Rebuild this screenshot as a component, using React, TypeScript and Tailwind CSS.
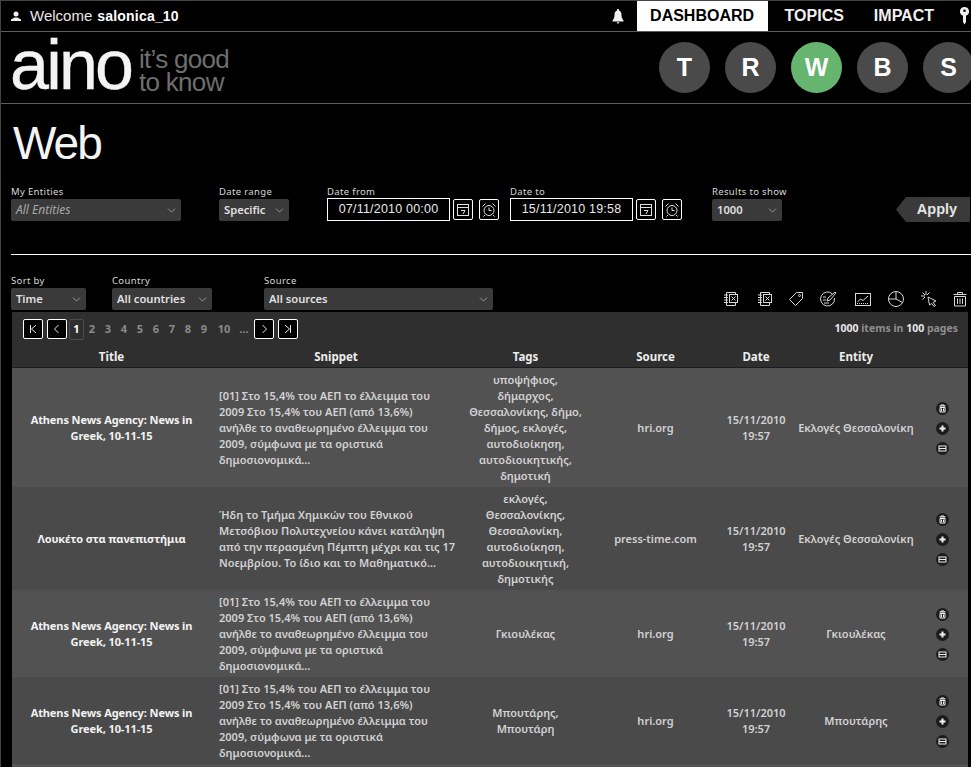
import { ChevronDown } from "lucide-react"

const tableFont = "font-['Noto_Sans',sans-serif]"
const headFont = "font-['Liberation_Sans',Arial,sans-serif]"

const athensSnippet = [
  "[01] Στο 15,4% του ΑΕΠ το έλλειμμα του",
  "2009 Στο 15,4% του ΑΕΠ (από 13,6%)",
  "ανήλθε το αναθεωρημένο έλλειμμα του",
  "2009, σύμφωνα με τα οριστικά",
  "δημοσιονομικά...",
]

const rows = [
  {
    title: "Athens News Agency: News in Greek, 10-11-15",
    snippet: athensSnippet,
    tags: "υποψήφιος, δήμαρχος, Θεσσαλονίκης, δήμο, δήμος, εκλογές, αυτοδιοίκηση, αυτοδιοικητικής, δημοτική",
    source: "hri.org",
    entity: "Εκλογές Θεσσαλονίκη",
    bg: "bg-[#525252]",
  },
  {
    title: "Λουκέτο στα πανεπιστήμια",
    snippet: [
      "Ήδη το Τμήμα Χημικών του Εθνικού",
      "Μετσόβιου Πολυτεχνείου κάνει κατάληψη",
      "από την περασμένη Πέμπτη μέχρι και τις 17",
      "Νοεμβρίου. Το ίδιο και το Μαθηματικό...",
    ],
    tags: "εκλογές, Θεσσαλονίκης, Θεσσαλονίκη, αυτοδιοίκηση, αυτοδιοικητική, δημοτικής",
    source: "press-time.com",
    entity: "Εκλογές Θεσσαλονίκη",
    bg: "bg-[#4a4a4a]",
  },
  {
    title: "Athens News Agency: News in Greek, 10-11-15",
    snippet: athensSnippet,
    tags: "Γκιουλέκας",
    source: "hri.org",
    entity: "Γκιουλέκας",
    bg: "bg-[#525252]",
  },
  {
    title: "Athens News Agency: News in Greek, 10-11-15",
    snippet: athensSnippet,
    tags: "Μπουτάρης, Μπουτάρη",
    source: "hri.org",
    entity: "Μπουτάρης",
    bg: "bg-[#4a4a4a]",
  },
  {
    title: "Athens News Agency: News in Greek, 10-11-15",
    snippet: athensSnippet,
    tags: "Μπουτάρης",
    source: "hri.org",
    entity: "Μπουτάρης",
    bg: "bg-[#525252]",
  },
]

const cols = "grid grid-cols-[199px_250px_129px_131px_70px_130px_47px]"

function Select({ label, value, width, italic }: { label: string; value: string; width: string; italic?: boolean }) {
  return (
    <div className={width}>
      <div className={`${tableFont} text-[9.5px] leading-[12px] tracking-[0.35px] whitespace-nowrap text-[#d8d8d8] mb-[1px]`}>{label}</div>
      <div className={`h-[22px] rounded-[2px] bg-[#3a3a3a] flex items-center justify-between pl-[5px] pr-[3px] ${tableFont} ${italic ? "text-[12px] italic text-[#a8a8a8]" : "text-[11.2px] font-semibold text-[#e0e0e0]"}`}>
        <span>{value}</span>
        <ChevronDown className="w-[13px] h-[13px] text-[#e0e0e0]" strokeWidth={1} />
      </div>
    </div>
  )
}

function CalendarBtn() {
  return (
    <div className="w-[20px] h-[21px] border border-white rounded-[2px] flex items-center justify-center">
      <svg width="14" height="14" viewBox="0 0 14 14" fill="none" stroke="#e0e0e0">
        <rect x="1.5" y="1.5" width="11" height="11" />
        <path d="M1.5 4.500h11M5 7.500h4L7 11" />
      </svg>
    </div>
  )
}

function ClockBtn() {
  return (
    <div className="w-[20px] h-[21px] border border-white rounded-[2px] flex items-center justify-center">
      <svg width="16" height="16" viewBox="0 0 16 16" fill="none" stroke="#e0e0e0">
        <circle cx="8" cy="8.500" r="5" />
        <path d="M8 5.500v3h2.500M1.500 4.500l3-3M14.500 4.500l-3-3M4 13l-1.500 1.500M12 13l1.500 1.500" />
      </svg>
    </div>
  )
}

function DateField({ label, value }: { label: string; value: string }) {
  return (
    <div>
      <div className={`${tableFont} text-[9.5px] leading-[12px] tracking-[0.35px] text-[#d8d8d8]`}>{label}</div>
      <div className="flex items-center">
        <div className={`w-[123px] h-[23px] border border-white flex items-center justify-center ${headFont} text-[12.5px] text-[#e8e8e8] tracking-[0.2px]`}>{value}</div>
        <div className="ml-[3px]"><CalendarBtn /></div>
        <div className="ml-[6px]"><ClockBtn /></div>
      </div>
    </div>
  )
}

function PageBtn({ d }: { d: string }) {
  return (
    <div className="w-[20px] h-[20px] bg-black border border-white rounded-[2px] flex items-center justify-center">
      <svg width="12" height="12" viewBox="0 0 12 12" fill="none" stroke="#e8e8e8"><path d={d} /></svg>
    </div>
  )
}

function ToolIcon({ children, className }: { children: React.ReactNode; className: string }) {
  return (
    <svg className={className} width="18" height="18" viewBox="0 0 18 18" fill="none" stroke="#d8d8d8" strokeWidth="1">
      {children}
    </svg>
  )
}

function SheetPaths() {
  return (
    <>
      <path d="M4.500 2.500h9v2M4.500 2.500v13h9v-3" />
      <rect x="7.500" y="4.500" width="8" height="8" />
      <path d="M9.500 6.500l4 4M13.500 6.500l-4 4M2 5h4M2 7.500h4M2 10h4M2 12.500h4" />
    </>
  )
}

function RowAction({ children }: { children: React.ReactNode }) {
  return (
    <div className="w-[13px] h-[13px] rounded-full bg-[#1c1c1c] flex items-center justify-center">
      <svg width="9" height="9" viewBox="0 0 9 9" fill="none" stroke="#f0f0f0" strokeWidth="1">{children}</svg>
    </div>
  )
}

export default function App() {
  return (
    <div className="w-[971px] h-[767px] overflow-hidden bg-black border-t border-l border-[#444444] text-white">
      {/* Top bar */}
      <div className="h-[31px] flex border-b border-[#5c5c5c] w-[1000px]">
        <div className={`flex items-center ${headFont} text-[15px] text-[#e8e8e8]`}>
          <svg className="ml-[10px] mr-[9px]" width="10" height="10" viewBox="0 0 10 10" fill="#f0f0f0">
            <circle cx="5" cy="3" r="2.500" />
            <path d="M0 10V8.500L3.500 6.500h3L10 8.500V10z" />
          </svg>
          <span>Welcome</span>
          <b className="ml-[5px] font-bold text-[14px] tracking-[0.2px] text-white">salonica_10</b>
        </div>
        <div className="ml-auto flex items-center">
          <svg width="12" height="15" viewBox="0 0 12 15" fill="#f0f0f0">
            <path d="M6 0a1 1 0 0 1 1 1.500c2 .5 2.500 2.500 2.500 4.500 0 3 1 4 2 5.500V12.500H.5V11.500c1-1.500 2-2.500 2-5.500 0-2 .5-4 2.500-4.500A1 1 0 0 1 6 0z" />
            <path d="M4.500 13.300h3L6 15z" />
          </svg>
          <div className={`ml-[13px] w-[131px] h-[30px] bg-white text-black flex items-center justify-center ${headFont} font-bold text-[16px]`}>DASHBOARD</div>
          <div className={`ml-[17px] ${headFont} font-bold text-[16px] text-[#f0f0f0]`}>TOPICS</div>
          <div className={`ml-[30px] ${headFont} font-bold text-[16px] text-[#f0f0f0]`}>IMPACT</div>
          <svg className="ml-[26px] mr-[32px]" width="9" height="18" viewBox="0 0 9 18" fill="#f0f0f0">
            <path fillRule="evenodd" d="M4.500 0a4.500 4.500 0 0 1 1.500 8.750V15l-1.500 2.500L3 15V8.750A4.500 4.500 0 0 1 4.500 0zm0 2.500a1.300 1.300 0 1 0 0 2.600 1.300 1.300 0 0 0 0-2.600z" />
          </svg>
        </div>
      </div>

      {/* Logo row */}
      <div className="h-[72px] flex items-center border-b border-[#5c5c5c] w-[1000px]">
        <div className={`ml-[9px] w-[122px] ${headFont} text-[70px] leading-[72px] tracking-[-2.800px] [-webkit-text-stroke:0.4px_#f4f4f4] text-[#f4f4f4] -mt-[5px]`}>aino</div>
        <div className={`ml-[7px] w-[100px] ${headFont} text-[26px] leading-[23px] tracking-[-0.7px] text-[#6e6e6e] mt-[6px]`}>
          it’s good<br />to know
        </div>
        <div className={`ml-[420px] flex gap-[15px] ${headFont} font-bold text-[25px]`}>
          {["T", "R", "W", "B", "S"].map((l) => (
            <div key={l} className={`w-[51px] h-[51px] rounded-full flex items-center justify-center ${l === "W" ? "bg-[#66b56e]" : "bg-[#4a4a4a]"}`}>{l}</div>
          ))}
        </div>
      </div>

      {/* Page title */}
      <h1 className={`ml-[12px] mt-[9px] h-[60px] ${headFont} text-[46px] leading-[60px] tracking-[-2px] text-[#f4f4f4]`}>Web</h1>

      {/* Main filters */}
      <div className="ml-[10px] mt-[13px] flex items-start h-[35px]">
        <Select label="My Entities" value="All Entities" width="w-[170px]" italic />
        <div className="ml-[38px]"><Select label="Date range" value="Specific" width="w-[70px]" /></div>
        <div className="ml-[38px]"><DateField label="Date from" value="07/11/2010 00:00" /></div>
        <div className="ml-[11px]"><DateField label="Date to" value="15/11/2010 19:58" /></div>
        <div className="ml-[30px]"><Select label="Results to show" value="1000" width="w-[70px]" /></div>
        <div className={`ml-[114px] mt-[11px] h-[25px] w-[74px] bg-[#3a3a3a] [clip-path:polygon(10px_0,100%_0,100%_100%,10px_100%,0_50%)] flex items-center justify-center pl-[8px] ${headFont} font-bold text-[14.5px] text-[#e4e4e4]`}>Apply</div>
      </div>

      <div className="ml-[10px] mt-[33px] h-px bg-white" />

      {/* Secondary filters */}
      <div className="ml-[10px] mt-[20px] flex items-start h-[35px]">
        <Select label="Sort by" value="Time" width="w-[75px]" />
        <div className="ml-[26px]"><Select label="Country" value="All countries" width="w-[100px]" /></div>
        <div className="ml-[52px]"><Select label="Source" value="All sources" width="w-[229px]" /></div>
        <div className="ml-[229px] mt-[15px] relative h-[18px] flex">
          <ToolIcon className=""><SheetPaths /></ToolIcon>
          <ToolIcon className="ml-[16px]"><SheetPaths /></ToolIcon>
          <ToolIcon className="ml-[13px]">
            <path d="M9.500 2.500h6v6l-7 7-6-6z" />
            <circle cx="12.500" cy="5.500" r="1" />
          </ToolIcon>
          <ToolIcon className="ml-[14px]">
            <path d="M13.500 4a7 7 0 1 0 2 4" />
            <path d="M8 11l1-3 7-6 1 1-6 7zM4 7h3M4 10h3M5 13h5" />
          </ToolIcon>
          <ToolIcon className="ml-[17px]">
            <rect x="1.500" y="3.500" width="15" height="12" />
            <path d="M3.500 12l3-3 2.500 1.500 5-4.500" />
            <path d="M3 13.500h12" strokeDasharray="1 1" />
          </ToolIcon>
          <ToolIcon className="ml-[15px]">
            <circle cx="9" cy="9" r="7.500" />
            <path d="M9 1.500V9l6.500 3.500M9 9H1.500" />
          </ToolIcon>
          <ToolIcon className="ml-[15px]">
            <path d="M8 7l8 4-3 1.500 2.500 3-1.500 1-2.500-3L9.500 15z" />
            <path d="M6 1v4M1 6h4M2.500 2.500l2.500 2.500M9.500 2.500L7 5M2.500 9.500L5 7" />
          </ToolIcon>
          <ToolIcon className="ml-[13px]">
            <path d="M2.500 4.500h13M6.500 4.500v-2h5v2M3.500 6.500h11v9.500h-11zM6.500 8.500v5.500M9 8.500v5.500M11.500 8.500v5.500" />
          </ToolIcon>
        </div>
      </div>

      {/* Table */}
      <div className={`ml-[11px] mt-[2px] w-[956px] ${tableFont}`}>
        <div className="bg-[#2f2f2f] h-[56px] border-b border-[#1c1c1c]">
          <div className="h-[34px] flex items-center pl-[11px] pr-[10px] font-bold text-[11px]">
            <PageBtn d="M3.500 2v8M9 2L4.500 6 9 10" />
            <div className="ml-[4px]"><PageBtn d="M7.500 2L3.500 6l4 4" /></div>
            <div className="ml-[2px] w-[15px] h-[21px] rounded-[2px] border border-[#4c4c4c] flex items-center justify-center text-white">1</div>
            {["2", "3", "4", "5", "6", "7", "8", "9"].map((n) => (
              <div key={n} className="w-[16px] text-center text-[#8a8a8a]">{n}</div>
            ))}
            <div className="w-[22px] ml-[1px] text-center text-[#8a8a8a]">10</div>
            <div className="w-[18px] text-center text-[#8a8a8a]">...</div>
            <div className="ml-[1px]"><PageBtn d="M4.500 2l4 4-4 4" /></div>
            <div className="ml-[4px]"><PageBtn d="M3 2l4.500 4L3 10M8.500 2v8" /></div>
            <div className="ml-auto text-[10.500px] text-[#8e8e8e]">
              <span className="text-[#e8e8e8]">1000</span> items in <span className="text-[#e8e8e8]">100</span> pages
            </div>
          </div>
          <div className={`${cols} h-[21px] items-center text-center font-bold text-[11.5px] text-[#ececec]`}>
            <div>Title</div>
            <div>Snippet</div>
            <div>Tags</div>
            <div>Source</div>
            <div>Date</div>
            <div>Entity</div>
          </div>
        </div>

        {rows.map((r, i) => (
          <div key={i} className={`${cols} ${r.bg} items-center pt-[4px] pb-[3px] font-semibold text-[11px] leading-[16px] text-[#d2d2d2] text-center`}>
            <div className="px-[17px] font-bold tracking-[-0.1px] text-[#f2f2f2]">{r.title}</div>
            <div className="pl-[8px] text-left whitespace-nowrap">
              {r.snippet.map((line) => (
                <div key={line}>{line}</div>
              ))}
            </div>
            <div className="px-[4px]">{r.tags}</div>
            <div>{r.source}</div>
            <div>15/11/2010<br />19:57</div>
            <div className="whitespace-nowrap">{r.entity}</div>
            <div className="flex flex-col items-center gap-[7px] pr-[4px]">
              <RowAction><path d="M1.500 2h6M3 2V1h3v1M2 3.500h5V8H2zM3.500 4.500V7M5.500 4.500V7" /></RowAction>
              <RowAction><path d="M4.500 1.500v6M1.500 4.500h6" strokeWidth="2" /></RowAction>
              <RowAction><rect x="1" y="2" width="7" height="5" /><path d="M1 4.500h7" /></RowAction>
            </div>
          </div>
        ))}
      </div>
    </div>
  )
}
